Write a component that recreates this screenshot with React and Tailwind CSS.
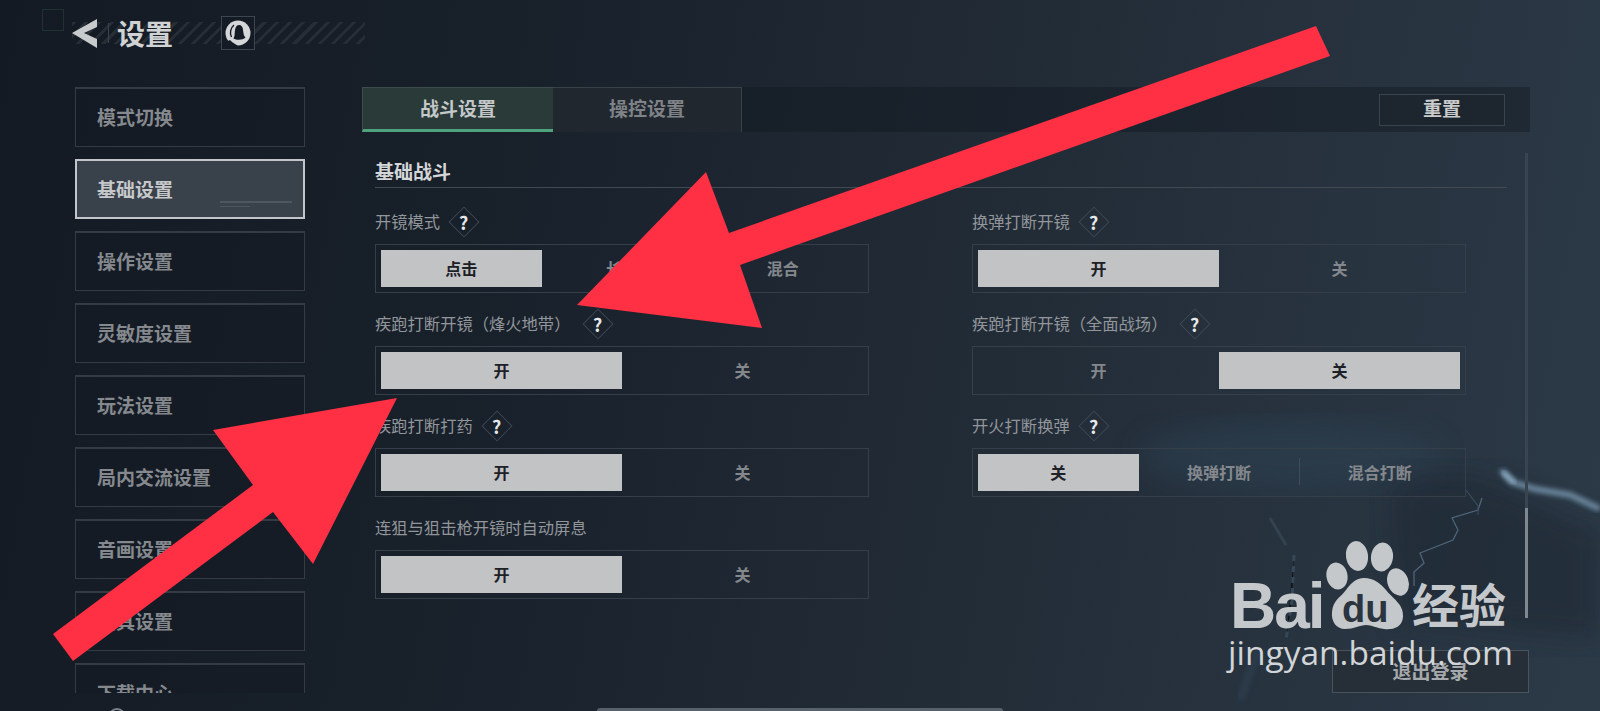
const menu = ["模式切换", "基础设置", "操作设置", "灵敏度设置", "玩法设置", "局内交流设置", "音画设置", "载具设置", "下载中心"];

const settings = [
  { label: "开镜模式", help: true, options: ["点击", "长按", "混合"], active: 0 },
  { label: "换弹打断开镜", help: true, options: ["开", "关"], active: 0 },
  { label: "疾跑打断开镜（烽火地带）", help: true, options: ["开", "关"], active: 0 },
  { label: "疾跑打断开镜（全面战场）", help: true, options: ["开", "关"], active: 1 },
  { label: "疾跑打断打药", help: true, options: ["开", "关"], active: 0 },
  { label: "开火打断换弹", help: true, options: ["关", "换弹打断", "混合打断"], active: 0 },
  { label: "连狙与狙击枪开镜时自动屏息", help: false, options: ["开", "关"], active: 0 },
];

const Help = () => (
  <div className="ml-[13px] w-[22px] h-[22px] rotate-45 border border-[#3d4751] flex items-center justify-center">
    <span className="-rotate-45 text-[18px] font-bold text-[#e6e8ea] leading-none">?</span>
  </div>
);

// the brackets sit centred in their cell in the game's font, TC has that form
const Label = ({ text }) => (
  <span className="text-[16.3px] text-[#92969b] whitespace-nowrap">
    {text.split(/([（）])/).map((part, i) =>
      part === "（" ? (
        <span key={i} className="font-['Noto_Sans_CJK_TC',sans-serif]">{part}</span>
      ) : part === "）" ? (
        <span key={i} className="mr-[4px] font-['Noto_Sans_CJK_TC',sans-serif]">{part}</span>
      ) : (
        part
      )
    )}
  </span>
);

const Setting = ({ label, help, options, active }) => (
  <div className="h-[102px]">
    <div className="h-[53px] pt-[8px] flex items-center">
      <Label text={label} />
      {help && <Help />}
    </div>
    <div className="h-[49px] border border-[#353f49] p-[5px] flex">
      {options.map((opt, i) => (
        <div
          key={opt}
          className={
            i === active
              ? "flex-1 flex items-center justify-center pb-[2px] bg-[#c1c3c5] text-[#1d2126] text-[16px] font-bold"
              : i === 2
                ? "flex-1 flex items-center justify-center pb-[2px] text-[#84888d] text-[16px] font-bold relative before:absolute before:left-0 before:top-[4px] before:h-[27px] before:w-px before:bg-[#414c57]"
                : "flex-1 flex items-center justify-center pb-[2px] text-[#84888d] text-[16px] font-bold"
          }
        >
          {opt}
        </div>
      ))}
    </div>
  </div>
);

const Sidebar = () => (
  <div className="w-[230px] h-[606px] overflow-hidden flex flex-col gap-3 shrink-0">
    {menu.map((name) =>
      name === "基础设置" ? (
        <div key={name} className="relative h-[60px] shrink-0 border-2 border-[#c2c6ca] bg-[#39414a] flex items-center pl-[20px] text-[19px] font-bold text-[#c6c8ca]">
          {name}
          <div className="absolute left-[143px] top-[40px] w-[72px] h-[2px] bg-[#4e5760]" />
          <div className="absolute left-[143px] top-[45px] w-[30px] h-[1px] bg-[#4c555e]" />
        </div>
      ) : (
        <div key={name} className="h-[60px] shrink-0 border border-t-2 border-[#343b43] bg-[#131a23]/50 flex items-center pl-[21px] text-[19px] font-bold text-[#85898e]">
          {name}
        </div>
      )
    )}
  </div>
);

const Header = () => (
  <div className="h-[87px] pt-4 pl-[72px]">
    <div className="w-[293px] h-[34px] flex items-center bg-[repeating-linear-gradient(135deg,#262d35_0,#262d35_3px,transparent_3px,transparent_9px)] bg-no-repeat bg-[length:100%_22px] bg-center">
      <svg width="25" height="30" viewBox="0 0 25 30" className="shrink-0">
        <path d="M0 15 L25 1 L25 9 L12 15 L25 21 L25 30 Z" fill="#c8cbcd" />
      </svg>
      <div className="ml-[11px] w-px h-5 bg-[#3c444c]" />
      <span className="ml-[8px] text-[28px] font-bold text-[#d0d2d4] leading-none">设置</span>
      <div className="ml-[48px] w-[34px] h-[34px] border border-[#3d4650] bg-[#141b24] flex items-center justify-center">
        <svg width="28" height="28" viewBox="0 0 28 28">
          <circle cx="14" cy="14" r="12.5" fill="#d4d6d8" />
          <path d="M9.5 19.5 C11 17 10.5 14 11 11 C11.5 7.5 13 6 15 6 C17.5 6 19 8 19 11 C19.5 14 19.5 16.5 21.5 18.5 C19 21 13 21.5 9.5 19.5 Z" fill="#141b24" />
          <path d="M7.5 18 C5.5 14 6.5 9 10 6" fill="none" stroke="#141b24" strokeWidth="1.4" />
          <path d="M6 21 C8.5 24 12 25 15 28 L8 28 L2 23 Z" fill="#141b24" />
        </svg>
      </div>
    </div>
  </div>
);

const Backdrop = () => (
  <svg width="1600" height="711" viewBox="0 0 1600 711" className="absolute inset-0">
    <defs>
      <filter id="soft"><feGaussianBlur stdDeviation="14" /></filter>
      <filter id="soft2"><feGaussianBlur stdDeviation="2.5" /></filter>
    </defs>
    <ellipse cx="1290" cy="455" rx="150" ry="35" fill="#2f4557" opacity="0.45" filter="url(#soft)" />
    <path d="M1390 490 C1430 470 1470 470 1510 490 C1540 505 1570 520 1600 530 L1600 640 L1400 620 Z" fill="#1d2630" opacity="0.55" filter="url(#soft)" />
    <path d="M1501 470 L1512 482 L1535 489 L1570 495 L1600 509" fill="none" stroke="#7f9fb8" strokeWidth="6" opacity="0.8" filter="url(#soft2)" />
    <path d="M1503 472 L1515 483" stroke="#a9cde2" strokeWidth="2.5" filter="url(#soft2)" />
    <path d="M1482 498 L1478 510 L1452 518 L1458 530 L1453 540 L1420 553 L1424 563 L1414 572 L1414 586" fill="none" stroke="#4f6578" strokeWidth="1.3" />
    <path d="M1466 490 L1478 506 L1478 515" fill="none" stroke="#3a4d5e" strokeWidth="1.2" />
    <path d="M1270 518 L1286 545" stroke="#3a4a59" strokeWidth="3" opacity="0.7" />
    <path d="M1294 555 L1292 600 L1286 640" stroke="#3d5062" strokeWidth="3" strokeDasharray="6 5" opacity="0.7" />
    <path d="M1240 700 L1258 650" stroke="#33475a" strokeWidth="8" opacity="0.45" filter="url(#soft2)" />
  </svg>
);

const Watermark = () => (
  <div className="absolute left-[1228px] top-[538px] w-[290px] h-[150px] text-[#c5c8cb]">
    <svg width="290" height="100" viewBox="1228 538 290 100" className="absolute left-0 top-0">
      <ellipse cx="1337" cy="576" rx="10.5" ry="13.5" transform="rotate(-12 1337 576)" fill="#c5c8cb" />
      <ellipse cx="1357" cy="556" rx="11" ry="15" transform="rotate(-8 1357 556)" fill="#c5c8cb" />
      <ellipse cx="1382" cy="557" rx="11" ry="14.5" transform="rotate(8 1382 557)" fill="#c5c8cb" />
      <ellipse cx="1398" cy="582" rx="10.5" ry="14" transform="rotate(-20 1398 582)" fill="#c5c8cb" />
      <path d="M1364 578 C1374 578 1380 583 1386 590 C1392 598 1404 604 1403 617 C1402 628 1392 630 1384 629 C1376 628 1372 625 1366 625 C1360 625 1354 629 1345 629 C1336 629 1331 621 1332 612 C1333 600 1340 598 1346 590 C1351 583 1356 578 1364 578 Z" fill="#c5c8cb" />
    </svg>
    <span className="absolute left-[2px] top-[36px] font-['Liberation_Sans',sans-serif] text-[64px] font-bold leading-none tracking-[-2px]">Bai</span>
    <span className="absolute left-[114px] top-[52px] font-['Liberation_Sans',sans-serif] text-[38px] font-bold leading-none text-[#2a3540]">du</span>
    <span className="absolute left-[184px] top-[41px] text-[47px] font-bold leading-none">经验</span>
    <span className="absolute left-0 top-[98px] font-['Open_Sans',sans-serif] text-[33.5px] leading-none whitespace-nowrap text-[#d2d5d7]">jingyan.baidu.com</span>
  </div>
);

export default function App() {
  return (
    <div className="relative w-[1600px] h-[711px] overflow-hidden bg-[linear-gradient(100deg,#131a23_0%,#18202a_30%,#222c37_62%,#2c3a47_100%)] font-['Noto_Sans_CJK_SC',sans-serif]">
      <Backdrop />
      <div className="absolute left-[42px] top-[9px] w-[22px] h-[22px] border border-[#1f3130]" />

      <div className="relative">
        <Header />
        <div className="flex pl-[75px] gap-[57px]">
          <Sidebar />
          <div className="w-[1168px]">
            {/* tabs */}
            <div className="h-[45px] flex bg-[#10161d]/40">
              <div className="w-[191px] pb-[1px] border-t border-l border-[#3c4c4a] border-b-[3px] border-b-[#4fa37c] bg-[#2a3a39] flex items-center justify-center text-[19px] font-bold text-[#c4c8c8]">
                战斗设置
              </div>
              <div className="w-[189px] pb-[3px] border-t border-r border-[#3a4048] bg-[#21272e] flex items-center justify-center text-[19px] font-bold text-[#7f8388]">
                操控设置
              </div>
              <div className="flex-1 flex items-center justify-end pr-[25px]">
                <div className="w-[126px] h-[32px] pb-[2px] border border-[#39444f] bg-[#1d262e] flex items-center justify-center text-[19px] font-bold text-[#c8cacc]">
                  重置
                </div>
              </div>
            </div>

            <div className="h-[518px] flex pl-[13px]">
              <div className="w-[1132px]">
                <div className="h-[56px] pt-[23px] border-b border-[#414a53] text-[19px] font-bold text-[#d4d6d8] leading-[34px] flex items-center">
                  基础战斗
                </div>
                <div className="grid grid-cols-[494px_494px] gap-x-[103px] mt-[3px]">
                  {settings.map((s) => (
                    <Setting key={s.label} {...s} />
                  ))}
                </div>
              </div>
              {/* scrollbar */}
              <div className="ml-[18px] mt-[21px] w-[3px] h-[465px] bg-[#38444f] flex flex-col justify-end">
                <div className="h-[110px] bg-[#7f8890]" />
              </div>
            </div>

            <div className="flex justify-end pr-[1px]">
              <div className="w-[197px] h-[43px] border border-[#4a545e] bg-[#262e37] flex items-center justify-center text-[19px] font-bold text-[#a6a9ac]">
                退出登录
              </div>
            </div>
          </div>
        </div>
      </div>

      <div className="absolute left-[108px] top-[708px] w-[18px] h-[18px] rounded-full border-2 border-[#7a8086]" />
      <div className="absolute left-[597px] bottom-0 w-[406px] h-[3px] rounded-t-sm bg-[#56616c]" />

      <Watermark />

      {/* red arrows */}
      <svg width="1600" height="711" viewBox="0 0 1600 711" className="absolute inset-0">
        <polygon points="1316,26 1330,56 740,265 762,328 577,305 706,172 729,233" fill="#ff3044" />
        <polygon points="53,634 73,661 273,512 313,564 397,398 213,430 253,485" fill="#ff3044" />
      </svg>
    </div>
  );
}
